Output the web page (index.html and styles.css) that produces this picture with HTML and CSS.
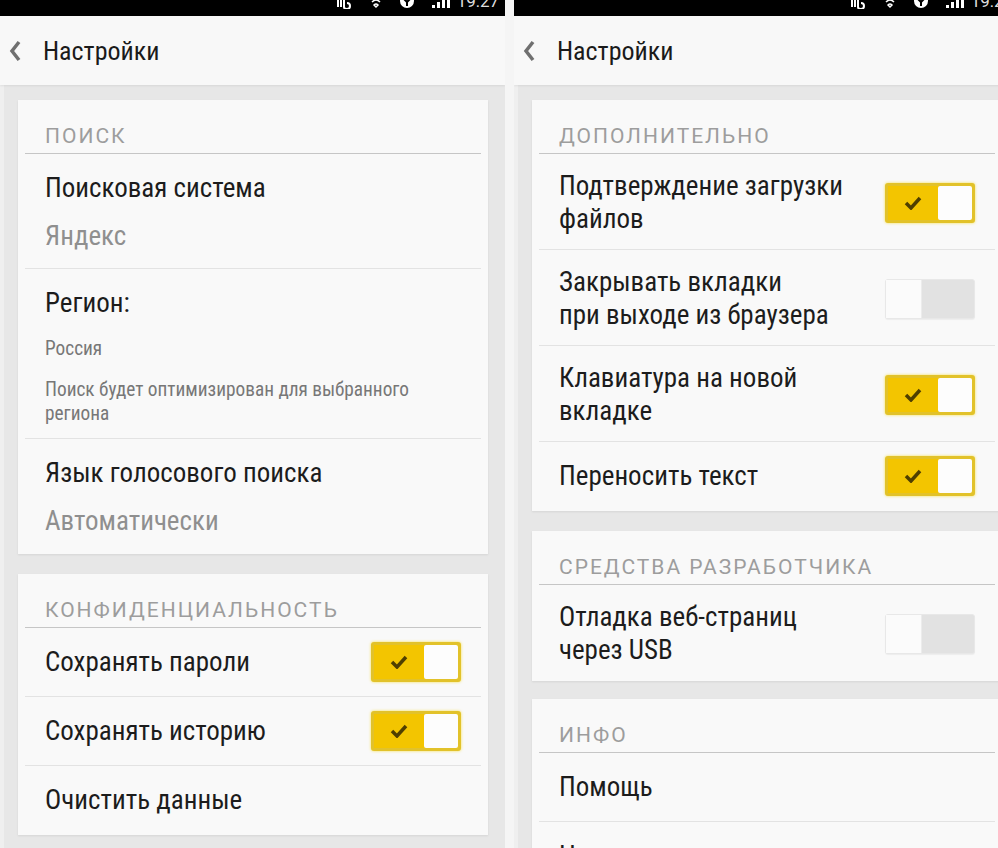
FILE: index.html
```html
<!DOCTYPE html>
<html>

<head>
    <meta charset="utf-8">
    <meta name="viewport" content="width=device-width, initial-scale=1.0">
    <link rel="stylesheet" href="styles.css">
</head>

<body>
    <div class="screens">

        <!-- left phone -->
        <section class="phone">
            <div class="statusbar">
                <svg class="st-icon" width="18" height="16" viewBox="0 0 18 16"><path d="M3 2v12M6 4v10M9 6v8c0 1.5 1.5 2 3 2s3-1 3-3-1.5-3-3-3" fill="none" stroke="#fff" stroke-width="2"/></svg>
                <svg class="st-icon" width="14" height="16" viewBox="0 0 14 16"><path d="M1 6q6-6 12 0M3 9q4-4 8 0M7 14l-2-2q2-2 4 0z" fill="none" stroke="#fff" stroke-width="1.5"/></svg>
                <svg class="st-icon" width="16" height="16" viewBox="0 0 16 16"><circle cx="8" cy="8" r="7" fill="#fff"/><path d="M5 6l3 3 3-3M8 9v4" stroke="#000" stroke-width="2" fill="none"/></svg>
                <svg class="st-icon" width="22" height="16" viewBox="0 0 22 16"><rect x="1" y="12" width="3" height="3" fill="#fff"/><rect x="6" y="9" width="3" height="6" fill="#fff"/><rect x="11" y="5" width="3" height="10" fill="#fff"/><rect x="16" y="1" width="3" height="14" fill="#fff"/></svg>
                <span class="st-time">19:27</span>
            </div>
            <header class="topbar">
                <svg class="back" width="14" height="22" viewBox="0 0 14 22"><polyline points="11,2 4,11 11,20" fill="none" stroke="#707070" stroke-width="3.5"/></svg>
                <h1>Настройки</h1>
            </header>
            <div class="content">
                <div class="card">
                    <div class="card-title">Поиск</div>
                    <div class="row">
                        <div class="row-text">
                            <div class="label">Поисковая система</div>
                            <div class="value">Яндекс</div>
                        </div>
                    </div>
                    <div class="row">
                        <div class="row-text">
                            <div class="label">Регион:</div>
                            <div class="small">Россия</div>
                            <div class="small desc">Поиск будет оптимизирован для выбранного региона</div>
                        </div>
                    </div>
                    <div class="row">
                        <div class="row-text">
                            <div class="label">Язык голосового поиска</div>
                            <div class="value">Автоматически</div>
                        </div>
                    </div>
                </div>

                <div class="card">
                    <div class="card-title">Конфиденциальность</div>
                    <div class="row">
                        <div class="label">Сохранять пароли</div>
                        <span class="switch on"><span class="switch-fill"><svg width="18" height="14" viewBox="0 0 18 14"><polyline points="2,7 7,12 16,2" fill="none" stroke="#4f3f00" stroke-width="3.5"/></svg></span><span class="switch-knob"></span></span>
                    </div>
                    <div class="row">
                        <div class="label">Сохранять историю</div>
                        <span class="switch on"><span class="switch-fill"><svg width="18" height="14" viewBox="0 0 18 14"><polyline points="2,7 7,12 16,2" fill="none" stroke="#4f3f00" stroke-width="3.5"/></svg></span><span class="switch-knob"></span></span>
                    </div>
                    <div class="row">
                        <div class="label">Очистить данные</div>
                    </div>
                </div>
            </div>
        </section>

        <!-- right phone -->
        <section class="phone">
            <div class="statusbar">
                <svg class="st-icon" width="18" height="16" viewBox="0 0 18 16"><path d="M3 2v12M6 4v10M9 6v8c0 1.5 1.5 2 3 2s3-1 3-3-1.5-3-3-3" fill="none" stroke="#fff" stroke-width="2"/></svg>
                <svg class="st-icon" width="14" height="16" viewBox="0 0 14 16"><path d="M1 6q6-6 12 0M3 9q4-4 8 0M7 14l-2-2q2-2 4 0z" fill="none" stroke="#fff" stroke-width="1.5"/></svg>
                <svg class="st-icon" width="16" height="16" viewBox="0 0 16 16"><circle cx="8" cy="8" r="7" fill="#fff"/><path d="M5 6l3 3 3-3M8 9v4" stroke="#000" stroke-width="2" fill="none"/></svg>
                <svg class="st-icon" width="22" height="16" viewBox="0 0 22 16"><rect x="1" y="12" width="3" height="3" fill="#fff"/><rect x="6" y="9" width="3" height="6" fill="#fff"/><rect x="11" y="5" width="3" height="10" fill="#fff"/><rect x="16" y="1" width="3" height="14" fill="#fff"/></svg>
                <span class="st-time">19:27</span>
            </div>
            <header class="topbar">
                <svg class="back" width="14" height="22" viewBox="0 0 14 22"><polyline points="11,2 4,11 11,20" fill="none" stroke="#707070" stroke-width="3.5"/></svg>
                <h1>Настройки</h1>
            </header>
            <div class="content">
                <div class="card">
                    <div class="card-title">Дополнительно</div>
                    <div class="row tall">
                        <div class="label">Подтверждение загрузки<br>файлов</div>
                        <span class="switch on"><span class="switch-fill"><svg width="18" height="14" viewBox="0 0 18 14"><polyline points="2,7 7,12 16,2" fill="none" stroke="#4f3f00" stroke-width="3.5"/></svg></span><span class="switch-knob"></span></span>
                    </div>
                    <div class="row tall">
                        <div class="label">Закрывать вкладки<br>при выходе из браузера</div>
                        <span class="switch off"><span class="switch-knob"></span></span>
                    </div>
                    <div class="row tall">
                        <div class="label">Клавиатура на новой<br>вкладке</div>
                        <span class="switch on"><span class="switch-fill"><svg width="18" height="14" viewBox="0 0 18 14"><polyline points="2,7 7,12 16,2" fill="none" stroke="#4f3f00" stroke-width="3.5"/></svg></span><span class="switch-knob"></span></span>
                    </div>
                    <div class="row">
                        <div class="label">Переносить текст</div>
                        <span class="switch on"><span class="switch-fill"><svg width="18" height="14" viewBox="0 0 18 14"><polyline points="2,7 7,12 16,2" fill="none" stroke="#4f3f00" stroke-width="3.5"/></svg></span><span class="switch-knob"></span></span>
                    </div>
                </div>

                <div class="card">
                    <div class="card-title">Средства разработчика</div>
                    <div class="row tall">
                        <div class="label">Отладка веб-страниц<br>через USB</div>
                        <span class="switch off"><span class="switch-knob"></span></span>
                    </div>
                </div>

                <div class="card info">
                    <div class="card-title">Инфо</div>
                    <div class="row">
                        <div class="label">Помощь</div>
                    </div>
                    <div class="row">
                        <div class="label">Написать отзыв</div>
                    </div>
                </div>
            </div>
        </section>

    </div>
</body>

</html>
```

FILE: styles.css
```css
body {
    margin: 0;
    background-color: #f5f5f5;
    font-family: Roboto, "Noto Sans", sans-serif;
    color: #1c1c1c;
    overflow: hidden;
}

.screens {
    display: flex;
    gap: 9px;
    width: 998px;
    height: 848px;
    overflow: hidden;
}

.phone {
    flex: 0 0 505px;
    width: 505px;
    height: 848px;
    display: flex;
    flex-direction: column;
    overflow: hidden;
}

/* status bar, cut off at the top in the shot */
.statusbar {
    flex: none;
    height: 16px;
    background-color: #000;
    display: flex;
    justify-content: flex-end;
    align-items: flex-start;
    gap: 16px;
    padding-right: 6px;
    overflow: hidden;
}

.st-icon {
    margin-top: -7px;
    flex: none;
}

.st-time {
    margin-top: -8px;
    margin-left: -12px;
    font-size: 17px;
    line-height: 18px;
    color: #ddd;
}

.topbar {
    flex: none;
    height: 69px;
    background-color: #f8f8f8;
    display: flex;
    align-items: center;
    box-shadow: 0 1px 2px rgba(0, 0, 0, 0.07);
    position: relative;
    z-index: 1;
}

.topbar .back {
    margin-left: 8px;
    margin-right: 21px;
}

.topbar h1 {
    margin: 0;
    font-size: 26px;
    font-weight: 400;
    font-stretch: 87.5%;
    color: #1a1a1a;
}

.content {
    flex: 1;
    background-color: #e7e7e7;
    border-left: 4px solid #efefef;
    padding: 15px 17px 0 14px;
    display: flex;
    flex-direction: column;
    gap: 20px;
}

.card {
    background-color: #f9f9f9;
    padding: 0 7px;
    box-shadow: 0 1px 2px rgba(0, 0, 0, 0.08);
    flex: none;
}

.card.info {
    margin-top: -2px;
}

.card-title {
    padding: 25px 20px 6px;
    line-height: 22px;
    font-size: 21px;
    letter-spacing: 2px;
    text-transform: uppercase;
    color: #9d9d9d;
    border-bottom: 1px solid #c6c6c6;
}

.row {
    display: flex;
    align-items: center;
    justify-content: space-between;
    min-height: 40px;
    padding: 14px 20px;
}

.row + .row {
    border-top: 1px solid #e3e3e3;
}

.row:last-child {
    padding-bottom: 15px;
}

.row.tall {
    padding-top: 16px;
    padding-bottom: 13px;
}

.row.tall:last-child {
    padding-bottom: 14px;
}

.row.tall .label {
    line-height: 33px;
}

.row-text {
    padding: 4px 0 2px;
}

.label {
    font-size: 27px;
    line-height: 32px;
    font-stretch: 87.5%;
}

.value {
    margin-top: 16px;
    font-size: 27px;
    line-height: 32px;
    font-stretch: 87.5%;
    color: #8f8f8f;
}

.small {
    margin-top: 18px;
    font-size: 19.3px;
    line-height: 24px;
    font-stretch: 87.5%;
    color: #777;
}

.small.desc {
    margin-top: 17px;
    margin-bottom: -4px;
    padding-right: 20px;
}

/* toggle switch */
.switch {
    flex: none;
    width: 90px;
    height: 40px;
    box-sizing: border-box;
    display: flex;
    border-radius: 3px;
}

.switch.on {
    background-color: #f3c500;
    border: 3px solid #e2c22a;
    box-shadow: 0 0 3px rgba(245, 215, 0, 0.7);
}

.switch-fill {
    width: 50px;
    display: flex;
    align-items: center;
    justify-content: center;
}

.switch.on .switch-knob {
    flex: 1;
    background-color: #fdfdfd;
    border-radius: 2px;
}

.switch.off {
    background-color: #e2e2e2;
    border: 1px solid #e8e8e8;
    box-shadow: 0 1px 1px rgba(0, 0, 0, 0.05);
}

.switch.off .switch-knob {
    width: 35px;
    background-color: #fbfbfb;
    border-right: 1px solid #ececec;
}
```
